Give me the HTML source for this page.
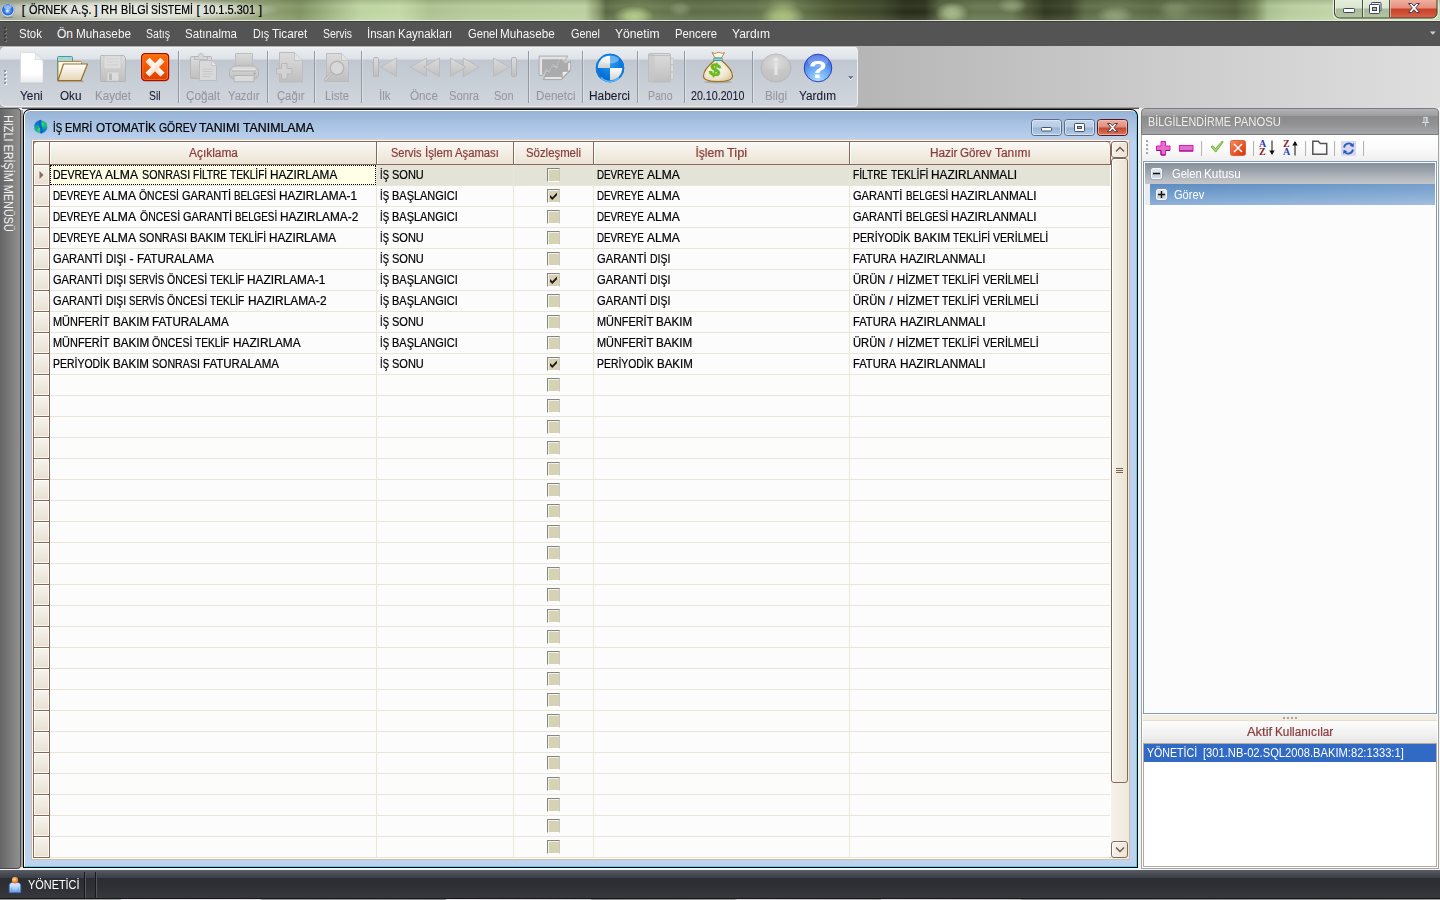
<!DOCTYPE html>
<html lang="tr"><head><meta charset="utf-8"><title>RH BİLGİ SİSTEMİ</title>
<style>

html,body{margin:0;padding:0;}
body{width:1440px;height:900px;overflow:hidden;background:#c8c8c8;font-family:"Liberation Sans",sans-serif;font-size:12px;}
#app{position:relative;width:1440px;height:900px;overflow:hidden;background:#f2f2f2;}
#app div,#app span,#app svg{position:absolute;box-sizing:border-box;}
.t{white-space:pre;line-height:1;transform-origin:0 0;-webkit-text-stroke:.22px;}

#title{background:linear-gradient(90deg,#a4ab98 0px,#a3ac92 140px,#98a57c 250px,#8c9d6e 275px,#7f9260 300px,#a4b987 335px,#bdd3a0 360px,#c2d8a4 400px,#adc190 430px,#b5c998 470px,#bcd09f 585px,#8a9a6c 598px,#5a6842 606px,#64734a 616px,#6e7e52 640px,#66744c 665px,#5f6d47 695px,#64724b 755px,#76865a 782px,#5a6842 812px,#48532f 835px,#3c442a 880px,#272c19 905px,#2a2f1c 925px,#55613e 940px,#66744e 975px,#66744e 1012px,#4a5436 1028px,#2f361f 1045px,#3a4228 1070px,#5c6a44 1085px,#66744e 1120px,#5a6843 1150px,#66744e 1190px,#525e3c 1235px,#75875a 1255px,#a9bf8e 1268px,#b8cd9e 1290px,#c2d6a8 1340px,#c4d8ac 1440px);overflow:hidden;}
#tblob{background:radial-gradient(ellipse 20px 10px at 634px 16px,rgba(180,204,136,0.95) 0,rgba(180,204,136,0.76) 40%,rgba(180,204,136,0) 100%),radial-gradient(ellipse 12px 8px at 680px 9px,rgba(132,148,108,0.80) 0,rgba(132,148,108,0.64) 40%,rgba(132,148,108,0) 100%),radial-gradient(ellipse 22px 12px at 783px 16px,rgba(170,192,122,0.95) 0,rgba(170,192,122,0.76) 40%,rgba(170,192,122,0) 100%),radial-gradient(ellipse 16px 6px at 783px 4px,rgba(140,158,104,0.60) 0,rgba(140,158,104,0.48) 40%,rgba(140,158,104,0) 100%),radial-gradient(ellipse 17px 11px at 952px 13px,rgba(170,190,142,0.95) 0,rgba(170,190,142,0.76) 40%,rgba(170,190,142,0) 100%),radial-gradient(ellipse 15px 9px at 1012px 5px,rgba(142,158,116,0.85) 0,rgba(142,158,116,0.68) 40%,rgba(142,158,116,0) 100%),radial-gradient(ellipse 19px 9px at 1115px 15px,rgba(146,162,120,0.85) 0,rgba(146,162,120,0.68) 40%,rgba(146,162,120,0) 100%),radial-gradient(ellipse 17px 11px at 1175px 10px,rgba(128,144,102,0.80) 0,rgba(128,144,102,0.64) 40%,rgba(128,144,102,0) 100%);}
#tglow{background:radial-gradient(ellipse at 50% 50%,rgba(255,255,255,.78) 0,rgba(255,255,255,.62) 45%,rgba(255,255,255,0) 72%);}
#tshade{background:linear-gradient(180deg,rgba(60,70,40,.18) 0,rgba(255,255,255,.06) 6px,rgba(255,255,255,.0) 12px,rgba(255,255,255,.12) 100%);}
#menu{background:linear-gradient(180deg,#3e3e3e 0,#3e3e3e 1px,#545454 1px);}
.mdot{width:2px;height:2px;background:#3a3a3a;box-shadow:1px 1px 0 #7a7a7a;}

#tbarea{background:linear-gradient(90deg,#b2b2b2 0,#b6b6b6 860px,#cbcbcb 1150px,#dedede 1440px);}
#tbsh{background:#eceef1;border-radius:5px 4px 4px 5px;}
#tb{background:linear-gradient(180deg,#f4f6f8 0,#e9ecef 2px,#dfe3e8 12px,#c0c7d0 13px,#c7cdd5 30px,#d1d6dc 100%);border-radius:5px 3px 3px 5px;}
.tsep{width:2px;height:52px;border-left:1px solid #959ba5;border-right:1px solid rgba(255,255,255,.3);}
.gdot{width:2px;height:2px;background:#8e96a3;box-shadow:1px 1px 0 #f4f6f8;}

#mdi{background:#f2f2f2;}
#side{background:linear-gradient(90deg,#656565 0,#7b7b7b 10px,#909090 20px);border-radius:0 4px 4px 0;border:1px solid #4a4a4a;border-left:none;}
#child{background:#000;border-radius:7px 7px 0 0;}
#childin{background:linear-gradient(180deg,#96b2d5 0,#a9c3e3 14px,#bcd3ef 30px,#bdd3ee 100%);border-radius:6px 6px 0 0;border-top:1px solid #fff;border-left:1px solid #fff;border-right:1px solid #43d4f6;border-bottom:1px solid #43d4f6;top:1px!important;left:1px!important;}
#gridout{background:#fbf9f4;border:1px solid #cdbfb0;border-top-color:#d9cec2;}
#grid{background:#fdfdfd;border:1px solid #876759;border-right-color:#fdfdfd;}
#ghead{background:#876759;border-radius:5px 5px 0 0;}
.hcell{background:linear-gradient(180deg,#fbf9f5 0,#f3eee4 50%,#ebe3d3 100%);box-shadow:inset 1px 1px 0 #fff;}
.row{background:#fcfcfc;border-bottom:1px solid #ebe4d9;}
.row.sel{background:#e4e3d8;}
.ind{background:linear-gradient(180deg,#f7f4ee 0,#efeadf 50%,#e8e0d0 100%);border:1px solid #876759;border-top:none;border-left:none;box-shadow:inset 1px 1px 0 #fff,inset -1px -1px 0 #fbf9f4;}
.vline{background:#ece5da;}
.cb{width:13px;height:14px;background:#d6d3b5;border-top:1px solid #858585;border-left:1px solid #858585;border-right:1px solid #c9c9c0;border-bottom:1px solid #fff;box-shadow:inset 1px 1px 0 #f1f0e6;}
#focus{border:1px dotted #000;background:#ffffe8;}
#vsb{background:linear-gradient(90deg,#f6f2ea,#efe9dc);}
.sbtn{background:linear-gradient(90deg,#f6f2ea 0,#ebe4d4 100%);border:1px solid #876759;border-radius:3px;box-shadow:inset 1px 1px 0 #fff;}

#ptb{background:linear-gradient(180deg,#fff 0,#fbfbfb 50%,#efefef 100%);}
#panel{background:#fff;border:1px solid #a4a4a4;border-top:none;}
#phead{background:linear-gradient(180deg,#b4b4b8 0,#9c9c9e 7px,#8b8b8c 7px,#909092 14px,#a4a6aa 25px);border:1px solid #7c7c7c;border-radius:4px 4px 0 0;}
.pdot{width:2px;height:2px;background:#a9a9a9;box-shadow:1px 1px 0 #eee;}
.psep{width:2px;height:15px;border-left:1px solid #b4b4b4;border-right:1px solid #f6f6f6;}
#tree{background:#fcfcfc;border:1px solid #7f9db9;}
#trow1{background:linear-gradient(180deg,#868f9b 0,#9aa1ab 35%,#b4b9bf 70%,#c4c6c8 100%);}
#trow2ind{background:#e9edf2;}
#trow2{background:linear-gradient(180deg,#5d8cc0 0,#6c9aca 40%,#8fb1d9 100%);}
#trow2:after{content:"";position:absolute;left:0;top:0;right:0;bottom:0;background:linear-gradient(90deg,rgba(255,255,255,0) 0,rgba(255,255,255,.16) 100%);}
.tbox{width:11px;height:11px;background:linear-gradient(180deg,#e4e8ee 0,#dde2ea 45%,#c6cedb 50%,#d4dae4 100%);border:1px solid #f6f7f9;border-radius:2px;box-shadow:0 0 0 1px rgba(140,155,180,.45);}
#split{background:#f3eee4;border-top:1px solid #fbf9f4;border-bottom:1px solid #e4dccd;}
#auhead{background:linear-gradient(180deg,#fdfdfd 0,#f1f1f1 60%,#e6e6e6 100%);}
#aulist{background:#fff;border:1px solid #b9a999;}

#status{background:linear-gradient(180deg,#5b5d68 0,#50525c 2px,#3c3e46 8px,#2c2d32 8px,#2e2f34 16px,#37383e 100%);}
#botedge{background:linear-gradient(90deg,#8f948f 0,#a4a8a2 120px,#e8e8e8 122px,#dcdcdc 260px,#9a9e9a 262px,#8c908c 445px,#e4e4e4 447px,#c4c6c4 590px,#8c908c 592px,#9a9e98 735px,#d8d8d8 737px,#a8aaa6 880px,#e0e0e0 882px,#b8bab6 1020px,#8c8e8c 1022px,#989a96 1440px);}
.ssep{width:2px;height:26px;border-left:1px solid #18181b;border-right:1px solid #55565e;}

</style></head><body>
<div id="app">
<div id="title" style="left:0;top:0;width:1440px;height:21px;"><div id="tblob" style="left:0;top:0;width:1440px;height:21px;"></div><div id="tglow" style="left:-12px;top:-2px;width:290px;height:24px;"></div><div id="tshade" style="left:0;top:0;width:1440px;height:21px;"></div><svg style="left:0;top:2px" width="16" height="17" viewBox="0 0 16 17"><defs><radialGradient id="orb" cx=".5" cy=".55" r=".6"><stop offset="0" stop-color="#9fd2ff"/><stop offset=".55" stop-color="#2f7be8"/><stop offset="1" stop-color="#1b3fae"/></radialGradient></defs>
<ellipse cx="8" cy="15.300" rx="5" ry="1" fill="#555" opacity=".4"/><circle cx="7.800" cy="8.200" r="6.800" fill="#e9eef5" stroke="#8a93a3" stroke-width=".6"/><circle cx="7.800" cy="7.800" r="5.800" fill="url(#orb)"/><ellipse cx="7.800" cy="4.800" rx="4" ry="2.200" fill="#fff" opacity=".45"/><circle cx="7.200" cy="9" r="1.500" fill="#dff1ff" opacity=".8"/></svg><span class="t" style="left:21.87px;top:4px;font-size:12px;color:#000;">[ </span><span class="t" style="left:28.65px;top:4px;font-size:12px;color:#000;transform:scaleX(0.9091);">ÖRNEK </span><span class="t" style="left:70.52px;top:4px;font-size:12px;color:#000;transform:scaleX(0.9002);">A.Ş. </span><span class="t" style="left:94.37px;top:4px;font-size:12px;color:#000;">] </span><span class="t" style="left:101.15px;top:4px;font-size:12px;color:#000;transform:scaleX(0.9421);">RH </span><span class="t" style="left:120.56px;top:4px;font-size:12px;color:#000;transform:scaleX(0.8985);">BİLGİ </span><span class="t" style="left:151.19px;top:4px;font-size:12px;color:#000;transform:scaleX(0.8720);">SİSTEMİ </span><span class="t" style="left:196.49px;top:4px;font-size:12px;color:#000;">[ </span><span class="t" style="left:203.27px;top:4px;font-size:12px;color:#000;transform:scaleX(0.9182);">10.1.5.301 </span><span class="t" style="left:258.79px;top:4px;font-size:12px;color:#000;">]</span><svg style="left:1330px;top:0" width="110" height="21" viewBox="0 0 110 21"><defs>
<linearGradient id="cbg" x1="0" y1="0" x2="0" y2="1"><stop offset="0" stop-color="#e6efdc"/><stop offset=".45" stop-color="#d9e6cd"/><stop offset=".5" stop-color="#a9b99a"/><stop offset="1" stop-color="#b7c9a6"/></linearGradient>
<linearGradient id="cbr" x1="0" y1="0" x2="0" y2="1"><stop offset="0" stop-color="#f0b3a4"/><stop offset=".45" stop-color="#e48f7c"/><stop offset=".5" stop-color="#c8402a"/><stop offset="1" stop-color="#d8694a"/></linearGradient>
<clipPath id="cbc"><path d="M4.500 -2V13a5 5 0 0 0 5 5H102a5 5 0 0 0 5-5V-2z"/></clipPath></defs>
<path d="M3.500 -2V13a6 6 0 0 0 6 6H102a6 6 0 0 0 6-6V-2" fill="none" stroke="#f2f6ea" stroke-width="1.200" opacity=".8"/>
<g clip-path="url(#cbc)"><rect x="4" y="-1" width="56" height="20" fill="url(#cbg)"/><rect x="60" y="-1" width="48" height="20" fill="url(#cbr)"/></g>
<path d="M4.500 -2V13a5 5 0 0 0 5 5H102a5 5 0 0 0 5-5V-2" fill="none" stroke="#38432f" stroke-width="1"/>
<path d="M32.500 0v17.500M59.500 0v17.500" stroke="#4a5540" stroke-width="1"/><path d="M33.500 0v17M5.500 0v13" stroke="#f4f8ee" stroke-width="1" opacity=".7"/><path d="M60.500 0v17" stroke="#f6c8bc" stroke-width="1" opacity=".7"/>
<rect x="13.500" y="8.500" width="11" height="4" rx=".8" fill="#fff" stroke="#3f4560" stroke-width="1"/>
<rect x="41.500" y="2.500" width="9.500" height="8.500" rx=".8" fill="#eef0f4" stroke="#3f4560" stroke-width="1"/><rect x="39.500" y="4.500" width="10" height="9" rx=".8" fill="#fff" stroke="#3f4560" stroke-width="1"/><rect x="42.500" y="7.500" width="4" height="3" fill="#a9b99a" stroke="#3f4560" stroke-width="1"/>
<path d="M78.500 3.500h3.200l2.300 2.600 2.300-2.600h3.200l-3.800 4.400 4 4.600h-3.300l-2.400-2.800-2.400 2.800h-3.300l4-4.600z" fill="#fff" stroke="#4a3a48" stroke-width="1" stroke-linejoin="round"/></svg><div style="left:0;top:20px;width:1440px;height:1px;background:#e6efda;opacity:.9"></div></div><div id="menu" style="left:0;top:21px;width:1440px;height:25px;"><div class="mdot" style="left:4px;top:6px;"></div><div class="mdot" style="left:4px;top:10px;"></div><div class="mdot" style="left:4px;top:14px;"></div><div class="mdot" style="left:4px;top:18px;"></div><span class="t" style="left:19px;top:7px;font-size:12px;color:#f6f6f6;transform:scaleX(0.9577);-webkit-text-stroke:0;">Stok</span><span class="t" style="left:57px;top:7px;font-size:12px;color:#f6f6f6;-webkit-text-stroke:0;">Ön </span><span class="t" style="left:76px;top:7px;font-size:12px;color:#f6f6f6;transform:scaleX(0.9813);-webkit-text-stroke:0;">Muhasebe</span><span class="t" style="left:146px;top:7px;font-size:12px;color:#f6f6f6;transform:scaleX(0.8772);-webkit-text-stroke:0;">Satış</span><span class="t" style="left:185px;top:7px;font-size:12px;color:#f6f6f6;transform:scaleX(0.9624);-webkit-text-stroke:0;">Satınalma</span><span class="t" style="left:252.5px;top:7px;font-size:12px;color:#f6f6f6;transform:scaleX(0.8971);-webkit-text-stroke:0;">Dış </span><span class="t" style="left:271.68px;top:7px;font-size:12px;color:#f6f6f6;transform:scaleX(0.9749);-webkit-text-stroke:0;">Ticaret</span><span class="t" style="left:322.5px;top:7px;font-size:12px;color:#f6f6f6;transform:scaleX(0.8697);-webkit-text-stroke:0;">Servis</span><span class="t" style="left:366.5px;top:7px;font-size:12px;color:#f6f6f6;transform:scaleX(0.9593);-webkit-text-stroke:0;">İnsan </span><span class="t" style="left:397.68px;top:7px;font-size:12px;color:#f6f6f6;transform:scaleX(0.9579);-webkit-text-stroke:0;">Kaynakları</span><span class="t" style="left:467.5px;top:7px;font-size:12px;color:#f6f6f6;transform:scaleX(0.9313);-webkit-text-stroke:0;">Genel </span><span class="t" style="left:500.31px;top:7px;font-size:12px;color:#f6f6f6;transform:scaleX(0.9757);-webkit-text-stroke:0;">Muhasebe</span><span class="t" style="left:570.5px;top:7px;font-size:12px;color:#f6f6f6;transform:scaleX(0.9054);-webkit-text-stroke:0;">Genel</span><span class="t" style="left:615px;top:7px;font-size:12px;color:#f6f6f6;transform:scaleX(1.0106);-webkit-text-stroke:0;">Yönetim</span><span class="t" style="left:675px;top:7px;font-size:12px;color:#f6f6f6;transform:scaleX(0.9395);-webkit-text-stroke:0;">Pencere</span><span class="t" style="left:732px;top:7px;font-size:12px;color:#f6f6f6;transform:scaleX(1.0054);-webkit-text-stroke:0;">Yardım</span><svg style="left:1429px;top:9px" width="8" height="6" viewBox="0 0 8 6"><path d="M.8 1.500h6L3.800 4.800z" fill="#c9cfdf"/></svg></div>
<div id="tbarea" style="left:0;top:46px;width:1440px;height:62px;"></div><div style="left:22px;top:107px;width:1117px;height:1px;background:#a2a2a2"></div><div style="left:22px;top:108px;width:1117px;height:1px;background:#565656"></div><div id="tbsh" style="left:0;top:47px;width:858px;height:60px;"></div><div id="tb" style="left:0;top:47px;width:857px;height:59px;"></div><div class="gdot" style="left:4px;top:70px;"></div><div class="gdot" style="left:4px;top:74px;"></div><div class="gdot" style="left:4px;top:78px;"></div><div class="gdot" style="left:4px;top:82px;"></div><span class="t" style="left:20.4px;top:90px;font-size:12px;color:#1a1a34;transform:scaleX(0.9860);-webkit-text-stroke:.1px;">Yeni</span><span class="t" style="left:60px;top:90px;font-size:12px;color:#1a1a34;transform:scaleX(0.9766);-webkit-text-stroke:.1px;">Oku</span><span class="t" style="left:95px;top:90px;font-size:12px;color:#9896a4;transform:scaleX(0.9636);-webkit-text-stroke:.1px;">Kaydet</span><span class="t" style="left:148.5px;top:90px;font-size:12px;color:#1a1a34;transform:scaleX(0.8618);-webkit-text-stroke:.1px;">Sil</span><span class="t" style="left:186px;top:90px;font-size:12px;color:#9896a4;transform:scaleX(0.9802);-webkit-text-stroke:.1px;">Çoğalt</span><span class="t" style="left:227.5px;top:90px;font-size:12px;color:#9896a4;transform:scaleX(0.9320);-webkit-text-stroke:.1px;">Yazdır</span><span class="t" style="left:276.5px;top:90px;font-size:12px;color:#9896a4;transform:scaleX(0.9372);-webkit-text-stroke:.1px;">Çağır</span><span class="t" style="left:325px;top:90px;font-size:12px;color:#9896a4;transform:scaleX(0.9464);-webkit-text-stroke:.1px;">Liste</span><span class="t" style="left:378.5px;top:90px;font-size:12px;color:#9896a4;transform:scaleX(0.9583);-webkit-text-stroke:.1px;">İlk</span><span class="t" style="left:410px;top:90px;font-size:12px;color:#9896a4;transform:scaleX(0.9760);-webkit-text-stroke:.1px;">Önce</span><span class="t" style="left:449px;top:90px;font-size:12px;color:#9896a4;transform:scaleX(0.9366);-webkit-text-stroke:.1px;">Sonra</span><span class="t" style="left:494px;top:90px;font-size:12px;color:#9896a4;transform:scaleX(0.9129);-webkit-text-stroke:.1px;">Son</span><span class="t" style="left:535.5px;top:90px;font-size:12px;color:#9896a4;transform:scaleX(0.9708);-webkit-text-stroke:.1px;">Denetci</span><span class="t" style="left:589px;top:90px;font-size:12px;color:#1a1a34;transform:scaleX(0.9913);-webkit-text-stroke:.1px;">Haberci</span><span class="t" style="left:648px;top:90px;font-size:12px;color:#9896a4;transform:scaleX(0.8740);-webkit-text-stroke:.1px;">Pano</span><span class="t" style="left:690.8px;top:90px;font-size:12px;color:#1a1a34;transform:scaleX(0.8891);-webkit-text-stroke:.1px;">20.10.2010</span><span class="t" style="left:764.7px;top:90px;font-size:12px;color:#9896a4;transform:scaleX(0.9697);-webkit-text-stroke:.1px;">Bilgi</span><span class="t" style="left:799.2px;top:90px;font-size:12px;color:#1a1a34;transform:scaleX(0.9816);-webkit-text-stroke:.1px;">Yardım</span><div class="tsep" style="left:178px;top:51px;"></div><div class="tsep" style="left:267px;top:51px;"></div><div class="tsep" style="left:314px;top:51px;"></div><div class="tsep" style="left:361px;top:51px;"></div><div class="tsep" style="left:528px;top:51px;"></div><div class="tsep" style="left:582px;top:51px;"></div><div class="tsep" style="left:637px;top:51px;"></div><div class="tsep" style="left:684px;top:51px;"></div><div class="tsep" style="left:752px;top:51px;"></div><svg style="left:847px;top:76px;" width="8" height="5" viewBox="0 0 8 5"><path d="M1 1.2h5.4L3.7 4.2z" fill="#f4f6f9"/><path d="M1 0.2h5.4L3.7 3.2z" fill="#5c6b8c"/></svg><svg width="0" height="0" style="left:0;top:0"><defs><linearGradient id="gg" x1="0" y1="0" x2="0" y2="1"><stop offset="0" stop-color="#dcdcdc"/><stop offset="1" stop-color="#bfbfbf"/></linearGradient><linearGradient id="gh" x1="0" y1="0" x2="1" y2="0"><stop offset="0" stop-color="#c2c2c2"/><stop offset="1" stop-color="#d8d8d8"/></linearGradient></defs></svg><svg style="left:19px;top:51px;" width="26" height="33" viewBox="0 0 26 33"><defs><linearGradient id="pg" x1="0" y1="0" x2="0" y2="1"><stop offset="0" stop-color="#ffffff"/><stop offset=".7" stop-color="#ffffff"/><stop offset="1" stop-color="#e9ebee"/></linearGradient></defs>
<path d="M1.5 1.5h14.5l8 8v22h-22.5z" fill="#b9bec6" opacity=".55" transform="translate(.6,.8)"/>
<path d="M1.5 1.5h14.5l8 8v22h-22.5z" fill="url(#pg)" stroke="#d5d8dd" stroke-width=".8"/>
<path d="M16 1.5c1 3 .6 5.5-.5 7.5 2.500-1 5.500-.8 8.500.5z" fill="#d9dbdf"/><path d="M16 1.500l8 8c-3-1.300-6-1.500-8.500-.5 1.100-2 1.500-4.500.5-7.500z" fill="#eceef0" stroke="#cfd2d6" stroke-width=".5"/></svg><svg style="left:56px;top:55px;" width="33" height="29" viewBox="0 0 33 29"><defs><linearGradient id="fo" x1="0" y1="0" x2="0" y2="1"><stop offset="0" stop-color="#ffffff"/><stop offset="1" stop-color="#e6d6b8"/></linearGradient></defs>
<rect x="1.500" y="25.500" width="26" height="1.600" fill="#9a875f" opacity=".6"/>
<path d="M1.500 25.500V2.500a1 1 0 0 1 1-1h13a1 1 0 0 1 1 1v3.500" fill="#a8d6d6" stroke="#3aa0a0" stroke-width="1"/>
<rect x="2.500" y="2.500" width="13" height="3.500" fill="#a5d5d3"/>
<path d="M2 6.500h22.500a1 1 0 0 1 1 1V25.500H2z" fill="#fbf7ee" stroke="#b08a46" stroke-width="1"/>
<path d="M2 25.500l5.500-16.500h24l-6.500 16.500z" fill="url(#fo)" stroke="#9a6f22" stroke-width="1.200" stroke-linejoin="round"/></svg><svg style="left:99px;top:54px;" width="28" height="29" viewBox="0 0 28 29"><path d="M1.500 2.500a1 1 0 0 1 1-1h22l2 2v23a1 1 0 0 1-1 1h-23a1 1 0 0 1-1-1z" fill="url(#gg)" stroke="#b4b4b4"/>
<rect x="5" y="1.800" width="17" height="13" fill="#dedede" stroke="#c2c2c2" stroke-width=".6"/>
<path d="M7 5h13M7 8h13M7 11h13" stroke="#cfcfcf" stroke-width="1"/>
<rect x="8" y="18" width="12" height="9" fill="#dcdcdc" stroke="#bdbdbd" stroke-width=".6"/><rect x="10" y="19.500" width="3" height="6.500" fill="#b9b9b9"/></svg><svg style="left:140px;top:52px;" width="30" height="30" viewBox="0 0 30 30"><defs><linearGradient id="sr" x1="0" y1="0" x2="0" y2="1"><stop offset="0" stop-color="#ff6e0a"/><stop offset=".5" stop-color="#f25600"/><stop offset="1" stop-color="#dc3c00"/></linearGradient>
<linearGradient id="sx" x1="0" y1="0" x2="0" y2="1"><stop offset="0" stop-color="#ffffff"/><stop offset="1" stop-color="#ffd9c4"/></linearGradient></defs>
<rect x="1.600" y="1.600" width="27" height="27" rx="3.500" fill="url(#sr)" stroke="#a30f00" stroke-width="1.200"/>
<rect x="2.800" y="2.800" width="24.600" height="24.600" rx="2.500" fill="none" stroke="#ff8a3a" stroke-width=".8" opacity=".8"/>
<g transform="translate(15,15.200)" fill="url(#sx)"><rect x="-10.600" y="-2.900" width="21.200" height="5.800" transform="rotate(45)"/><rect x="-10.600" y="-2.900" width="21.200" height="5.800" transform="rotate(-45)"/></g></svg><svg style="left:189px;top:52px;" width="29" height="30" viewBox="0 0 29 30"><rect x="1.500" y="4.500" width="21" height="22" rx="1" fill="url(#gg)" stroke="#b5b5b5"/>
<path d="M5.500 7.500V4.500h3.800c0-4 5.400-4 5.400 0h3.800V7.500z" fill="#d6d6d6" stroke="#b5b5b5" stroke-width=".8"/>
<path d="M10.500 8.500h12l5 5v15h-17z" fill="#d9d9d9" stroke="#bcbcbc"/><path d="M22.500 8.500v5h5" fill="#e6e6e6" stroke="#bcbcbc" stroke-width=".7"/>
<path d="M13.500 17h10M13.500 19.500h10M13.500 22h10M13.500 24.500h8" stroke="#c4c4c4" stroke-width=".9"/></svg><svg style="left:228px;top:52px;" width="32" height="31" viewBox="0 0 32 31"><path d="M7.500 1.500h17v14h-17z" fill="url(#gg)" stroke="#bdbdbd"/>
<path d="M1.500 21c0-4 3-7 7-7h15c4 0 7 3 7 7v1.500c0 2.500-2 4.500-4.500 4.500h-20c-2.500 0-4.500-2-4.500-4.500z" fill="url(#gg)" stroke="#b2b2b2"/>
<path d="M4.500 17.500h23" stroke="#e4e4e4" stroke-width="1.600"/><path d="M4 19h24" stroke="#a8a8a8" stroke-width=".8"/>
<path d="M6 23.500h20v5.500a.8.800 0 0 1-.8.800h-18.400a.8.800 0 0 1-.8-.8z" fill="#dadada" stroke="#b4b4b4"/><circle cx="26.500" cy="21.500" r=".9" fill="#999"/></svg><svg style="left:275px;top:51px;" width="29" height="32" viewBox="0 0 29 32"><path d="M4.500 1.500h15l8 8v21.500h-23z" fill="url(#gg)" stroke="#bcbcbc"/><path d="M19.500 1.500v8h8" fill="#e2e2e2" stroke="#c2c2c2" stroke-width=".8"/>
<path d="M6.500 12.500h5.500v5h5v5.500h-5v5h-5.500v-5h-5v-5.500h5z" fill="#d2d2d2" stroke="#b8b8b8" stroke-width="1"/></svg><svg style="left:322px;top:52px;" width="28" height="31" viewBox="0 0 28 31"><path d="M4.500 1.500h15l7 7v21h-22z" fill="url(#gg)" stroke="#bcbcbc"/><path d="M19.500 1.500v7h7" fill="#e2e2e2" stroke="#c2c2c2" stroke-width=".8"/>
<path d="M10.500 20.500l-7 7.500" stroke="#b4b4b4" stroke-width="3.200" stroke-linecap="round"/><path d="M10.500 20.500l-7 7.500" stroke="#d0d0d0" stroke-width="1.600" stroke-linecap="round"/>
<circle cx="15" cy="16" r="6.800" fill="#d8d8d8" stroke="#b6b6b6" stroke-width="1.400"/></svg><svg style="left:372px;top:56px;" width="27" height="22" viewBox="0 0 27 22"><rect x="1.500" y="1.500" width="5" height="19" rx="1.200" fill="url(#gg)" stroke="#b4b4b4"/><path d="M8.800 11.200L24.500 2v18.500z" fill="url(#gg)" stroke="#b8b8b8" stroke-width=".8"/></svg><svg style="left:409px;top:56px;" width="32" height="22" viewBox="0 0 32 22"><path d="M1.500 11.200L17.500 2v18.500z" fill="url(#gg)" stroke="#b8b8b8" stroke-width=".8"/><path d="M14.800 11.200L30.500 2v18.500z" fill="url(#gg)" stroke="#b8b8b8" stroke-width=".8"/></svg><svg style="left:449px;top:56px;" width="32" height="22" viewBox="0 0 32 22"><path d="M30 11.200L14.300 2v18.500z" fill="url(#gg)" stroke="#b8b8b8" stroke-width=".8"/><path d="M17 11.200L1.500 2v18.500z" fill="url(#gg)" stroke="#b8b8b8" stroke-width=".8"/></svg><svg style="left:492px;top:56px;" width="27" height="22" viewBox="0 0 27 22"><path d="M17.200 11.200L1.500 2v18.500z" fill="url(#gg)" stroke="#b8b8b8" stroke-width=".8"/><rect x="19.500" y="1.500" width="5" height="19" rx="1.200" fill="url(#gg)" stroke="#b4b4b4"/></svg><svg style="left:535px;top:52px;" width="40" height="32" viewBox="0 0 40 32"><path d="M4.100 4.100H32.900L29.700 8.400 24.900 7.500 22.400 14.200 17.800 12.600 15.300 19.400 11 17.400 7.100 23.800 4.100 23.100z" fill="#e3e3e3" stroke="#a6a6a6" stroke-width=".9" stroke-linejoin="round"/>
<path d="M7.100 7.300H24.500L22 13.500 17.600 12.100 14.900 18.500 10.800 16.900 7.600 22.400H7.100z" fill="#acacac"/>
<path d="M25.400 8.400L30.900 11.700 35.600 9.200 35.700 18.500 26.500 27.600H8.400L11.700 19.700 14.600 21.300 18.100 14.900 22.600 17.100z" fill="#ababab" stroke="#a6a6a6" stroke-width=".9" stroke-linejoin="round"/>
<path d="M33.100 11.400L35.200 10.300V18.100L33.100 18.800z" fill="#e6e6e6"/><path d="M27.700 20.100L32.900 19.700 27.700 24.900z" fill="#ececec"/><path d="M10.300 25.100H26.700L26.300 27H9.400z" fill="#e4e4e4"/></svg><svg style="left:595px;top:53px;" width="31" height="31" viewBox="0 0 31 31"><defs><radialGradient id="hb" cx=".5" cy=".35" r=".7"><stop offset="0" stop-color="#2a9af0"/><stop offset=".6" stop-color="#0a78dc"/><stop offset="1" stop-color="#0560c0"/></radialGradient>
<linearGradient id="hw" x1="0" y1="0" x2="0" y2="1"><stop offset="0" stop-color="#ffffff"/><stop offset="1" stop-color="#cfcfcf"/></linearGradient><clipPath id="hc"><circle cx="15" cy="15" r="14.200"/></clipPath></defs>
<circle cx="15" cy="15" r="14.200" fill="url(#hb)"/>
<g clip-path="url(#hc)"><path d="M15 15V2.500h-13V15z" fill="url(#hw)"/><path d="M15 15h13v13h-13z" fill="url(#hw)"/></g>
<circle cx="15" cy="15" r="13.200" fill="none" stroke="#0b7be0" stroke-width="2"/>
<ellipse cx="15" cy="6.500" rx="9" ry="4" fill="#fff" opacity=".35"/><path d="M6 24.500a12 12 0 0 0 18 0" stroke="#6fc6ff" stroke-width="1.600" fill="none" opacity=".8"/></svg><svg style="left:647px;top:52px;" width="28" height="31" viewBox="0 0 28 31"><rect x="23" y="6" width="3.500" height="6.500" rx=".8" fill="#dcdcdc" stroke="#c2c2c2" stroke-width=".7"/><rect x="23" y="13.200" width="3.500" height="6.500" rx=".8" fill="#dcdcdc" stroke="#c2c2c2" stroke-width=".7"/><rect x="23" y="20.400" width="3.500" height="6.500" rx=".8" fill="#dcdcdc" stroke="#c2c2c2" stroke-width=".7"/>
<rect x="1.500" y="1.500" width="22" height="28.500" rx="1.500" fill="url(#gg)" stroke="#bcbcbc"/><rect x="1.500" y="1.500" width="6" height="28.500" fill="#c6c6c6" opacity=".6"/><path d="M2 3.500h21" stroke="#b8b8b8" stroke-width=".8"/></svg><svg style="left:702px;top:51px;" width="33" height="33" viewBox="0 0 33 33"><defs><radialGradient id="mb" cx=".4" cy=".4" r=".75"><stop offset="0" stop-color="#fffdf6"/><stop offset=".6" stop-color="#f1e6cf"/><stop offset="1" stop-color="#d9c49a"/></radialGradient></defs>
<ellipse cx="16" cy="31" rx="14" ry="1.500" fill="#8a8570" opacity=".45"/>
<path d="M10 1.500l3 5.500h6.500l3-5.500q-2.500 1.500-4 .3-2-1.300-4 .2-2 1-4.500-.5z" fill="#fbf7ea" stroke="#a9853f" stroke-width=".9"/>
<path d="M12.500 9.500C7 14 1.500 20 1.500 25c0 4 5 5.500 14.500 5.500S30.500 29 30.500 25c0-5-5.500-11-11-15.500z" fill="url(#mb)" stroke="#9a6f1e" stroke-width="1.100"/>
<rect x="11.500" y="7" width="9" height="2.600" rx="1.200" fill="#8fd0cf" stroke="#2f9a9a" stroke-width=".8"/></svg><span class="t" style="left:709.8px;top:60.5px;font-size:18px;font-weight:bold;color:#6cba1c;text-shadow:0 0 1px #4a9410;transform:rotate(14deg) scaleX(1.1);transform-origin:50% 50%;">$</span><svg style="left:760px;top:53px;" width="33" height="30" viewBox="0 0 33 30"><defs><radialGradient id="bi" cx=".5" cy=".3" r=".8"><stop offset="0" stop-color="#dcdcdc"/><stop offset="1" stop-color="#b8b8b8"/></radialGradient></defs>
<ellipse cx="16" cy="15" rx="15" ry="14" fill="url(#bi)" stroke="#b4b4b4" stroke-width=".8"/><path d="M1.500 15a14.500 13.500 0 0 0 29 0q-14.500 3-29 0z" fill="#c4c4c4" opacity=".6"/>
<circle cx="16" cy="6.500" r="2.100" fill="#e8e8e8"/><rect x="14.300" y="10" width="3.400" height="12" rx="1" fill="#e4e4e4"/></svg><svg style="left:803px;top:53px;" width="30" height="30" viewBox="0 0 30 30"><defs><radialGradient id="yq" cx=".5" cy=".95" r=".9"><stop offset="0" stop-color="#b0e0ff"/><stop offset=".5" stop-color="#6aa8f6"/><stop offset="1" stop-color="#3563e0"/></radialGradient></defs>
<circle cx="15" cy="15" r="13.800" fill="url(#yq)" stroke="#2a3fc0" stroke-width="1"/>
<ellipse cx="15" cy="8" rx="10.500" ry="6" fill="#fff" opacity=".22"/></svg><span class="t" style="left:809px;top:57.5px;font-size:24px;font-weight:bold;color:#fff;transform:scaleX(1.22);">?</span>
<div id="mdi" style="left:0;top:109px;width:1440px;height:761px;"></div><div style="left:20px;top:110px;width:3px;height:757px;background:#a2a2a2;"></div><div id="side" style="left:0;top:108px;width:21px;height:761px;"></div><span class="t" style="left:0px;top:-11px;font-size:13px;color:#f4f4f4;transform:rotate(90deg) scaleX(0.8335);-webkit-text-stroke:0;left:14.5px;top:114.5px;">HIZLI ERİŞİM MENÜSÜ</span><div id="child" style="left:23px;top:109px;width:1115px;height:759px;"><div id="childin" style="left:0;top:0;width:1113px;height:757px;"></div></div><svg style="left:32px;top:118px" width="18" height="18" viewBox="0 0 18 18"><defs><filter id="bl" x="-20%" y="-20%" width="140%" height="140%"><feGaussianBlur stdDeviation=".75"/></filter>
<radialGradient id="sw0" cx=".5" cy=".5" r=".5"><stop offset="0" stop-color="#128cc0"/><stop offset=".72" stop-color="#16a0a0" stop-opacity=".9"/><stop offset="1" stop-color="#20b090" stop-opacity="0"/></radialGradient></defs>
<g filter="url(#bl)"><circle cx="8.700" cy="8.800" r="7.300" fill="url(#sw0)"/>
<path d="M8.500 2.300C5 2.300 2.300 5.300 2.300 8.500c2.200.5 4.700-.5 5.700-3z" fill="#0a6ad0" opacity=".8"/>
<path d="M9 15.300c3.600 0 6.200-3 6.200-6.200-2.200-.5-4.700.5-5.700 3z" fill="#0a74c8" opacity=".75"/>
<ellipse cx="12.300" cy="7.500" rx="2.600" ry="3.400" fill="#18b47c" opacity=".75"/><ellipse cx="5" cy="10.300" rx="2.600" ry="3.200" fill="#14a88c" opacity=".75"/>
<ellipse cx="10.900" cy="6.400" rx="1.700" ry="2.100" fill="#14e650" opacity=".95"/><ellipse cx="7" cy="11.800" rx="1.600" ry="2" fill="#22e25c" opacity=".95"/>
<path d="M8.300 3C6.500 6 11 11 9.200 14.400" fill="none" stroke="#0a5ae6" stroke-width="2.200" stroke-linecap="round"/></g></svg><span class="t" style="left:53px;top:122px;font-size:12px;color:#000;transform:scaleX(0.8057);">İŞ </span><span class="t" style="left:65.19px;top:122px;font-size:12px;color:#000;transform:scaleX(0.9140);">EMRİ </span><span class="t" style="left:95.65px;top:122px;font-size:12px;color:#000;transform:scaleX(0.9733);">OTOMATİK </span><span class="t" style="left:158.62px;top:122px;font-size:12px;color:#000;transform:scaleX(0.8669);">GÖREV </span><span class="t" style="left:199.24px;top:122px;font-size:12px;color:#000;transform:scaleX(1.0211);">TANIMI </span><span class="t" style="left:242.91px;top:122px;font-size:12px;color:#000;transform:scaleX(1.0284);">TANIMLAMA</span><svg style="left:1029px;top:117px" width="102" height="21" viewBox="0 0 102 21"><defs>
<linearGradient id="kb" x1="0" y1="0" x2="0" y2="1"><stop offset="0" stop-color="#c6d7ec"/><stop offset=".48" stop-color="#b7cce6"/><stop offset=".52" stop-color="#98b4d6"/><stop offset="1" stop-color="#b4cbe6"/></linearGradient>
<linearGradient id="kr" x1="0" y1="0" x2="0" y2="1"><stop offset="0" stop-color="#eeb0a2"/><stop offset=".48" stop-color="#e08d7a"/><stop offset=".52" stop-color="#c4452c"/><stop offset="1" stop-color="#dc7a62"/></linearGradient></defs>
<rect x="2.500" y="2.500" width="30" height="16" rx="3" fill="url(#kb)" stroke="#5a6b86"/><rect x="3.500" y="3.500" width="28" height="14" rx="2" fill="none" stroke="#dfe9f6" stroke-width="1" opacity=".8"/>
<rect x="35.500" y="2.500" width="30" height="16" rx="3" fill="url(#kb)" stroke="#5a6b86"/><rect x="36.500" y="3.500" width="28" height="14" rx="2" fill="none" stroke="#dfe9f6" stroke-width="1" opacity=".8"/>
<rect x="68.500" y="2.500" width="30" height="16" rx="3" fill="url(#kr)" stroke="#521a28"/><rect x="69.500" y="3.500" width="28" height="14" rx="2" fill="none" stroke="#f4c4b8" stroke-width="1" opacity=".7"/>
<rect x="12.500" y="10.500" width="10" height="3.500" rx=".8" fill="#fff" stroke="#46506a"/>
<rect x="45.500" y="6.500" width="10" height="8" rx=".8" fill="#fff" stroke="#46506a"/><rect x="48.500" y="9.500" width="4" height="2" fill="#98b4d6" stroke="#46506a"/>
<path d="M78.500 6.500h3l2 2.300 2-2.300h3l-3.500 4 3.700 4.200h-3.100l-2.100-2.500-2.100 2.500h-3.100l3.700-4.200z" fill="#fff" stroke="#4a3a48" stroke-width="1" stroke-linejoin="round"/></svg><div id="gridout" style="left:31px;top:139px;width:1099px;height:721px;"></div><div id="grid" style="left:33px;top:141px;width:1078px;height:717px;"></div><div id="ghead" style="left:33px;top:141px;width:1078px;height:24px;"></div><div class="hcell" style="left:34px;top:142px;width:15px;height:22px;border-radius:4px 0 0 0;"></div><div class="hcell" style="left:50px;top:142px;width:326px;height:22px;"></div><div class="hcell" style="left:377px;top:142px;width:136px;height:22px;"></div><div class="hcell" style="left:514px;top:142px;width:79px;height:22px;"></div><div class="hcell" style="left:594px;top:142px;width:255px;height:22px;"></div><div class="hcell" style="left:850px;top:142px;width:260px;height:22px;border-radius:0 4px 0 0;"></div><span class="t" style="left:188.5px;top:147px;font-size:12px;color:#8a3c3c;transform:scaleX(0.9927);">Açıklama</span><span class="t" style="left:391px;top:147px;font-size:12px;color:#8a3c3c;transform:scaleX(0.9167);">Servis </span><span class="t" style="left:424.62px;top:147px;font-size:12px;color:#8a3c3c;transform:scaleX(0.9595);">İşlem </span><span class="t" style="left:455.19px;top:147px;font-size:12px;color:#8a3c3c;transform:scaleX(0.9384);">Aşaması</span><span class="t" style="left:526px;top:147px;font-size:12px;color:#8a3c3c;transform:scaleX(0.9478);">Sözleşmeli</span><span class="t" style="left:695.5px;top:147px;font-size:12px;color:#8a3c3c;">İşlem </span><span class="t" style="left:727.34px;top:147px;font-size:12px;color:#8a3c3c;transform:scaleX(1.0674);">Tipi</span><span class="t" style="left:929.5px;top:147px;font-size:12px;color:#8a3c3c;transform:scaleX(0.9832);">Hazir </span><span class="t" style="left:960.11px;top:147px;font-size:12px;color:#8a3c3c;transform:scaleX(0.9675);">Görev </span><span class="t" style="left:994.79px;top:147px;font-size:12px;color:#8a3c3c;transform:scaleX(0.9914);">Tanımı</span><div class="row sel" style="left:50px;top:165px;width:1060px;height:21px;"></div><div class="ind" style="left:34px;top:165px;width:16px;height:21px;"></div><div class="cb" style="left:547px;top:168px;"></div><div id="focus" style="left:50px;top:165px;width:326px;height:20px;"></div><svg style="left:38px;top:170px" width="7" height="10" viewBox="0 0 7 10"><path d="M1.500 1l4 4-4 4z" fill="#8a6a5c"/></svg><span class="t" style="left:53.25px;top:169px;font-size:12px;color:#000;transform:scaleX(0.8708);">DEVREYA </span><span class="t" style="left:105.43px;top:169px;font-size:12px;color:#000;transform:scaleX(1.0131);">ALMA </span><span class="t" style="left:141.56px;top:169px;font-size:12px;color:#000;transform:scaleX(0.8918);">SONRASI </span><span class="t" style="left:192.74px;top:169px;font-size:12px;color:#000;transform:scaleX(0.8434);">FİLTRE </span><span class="t" style="left:229.87px;top:169px;font-size:12px;color:#000;transform:scaleX(0.8436);">TEKLİFİ </span><span class="t" style="left:270.01px;top:169px;font-size:12px;color:#000;transform:scaleX(0.9789);">HAZIRLAMA</span><span class="t" style="left:380px;top:169px;font-size:12px;color:#000;transform:scaleX(0.7889);">İŞ </span><span class="t" style="left:391.93px;top:169px;font-size:12px;color:#000;transform:scaleX(0.9177);">SONU</span><span class="t" style="left:597px;top:169px;font-size:12px;color:#000;transform:scaleX(0.8145);">DEVREYE </span><span class="t" style="left:646.7px;top:169px;font-size:12px;color:#000;transform:scaleX(1.0035);">ALMA</span><span class="t" style="left:853.25px;top:169px;font-size:12px;color:#000;transform:scaleX(0.8509);">FİLTRE </span><span class="t" style="left:890.71px;top:169px;font-size:12px;color:#000;transform:scaleX(0.8510);">TEKLİFİ </span><span class="t" style="left:931.2px;top:169px;font-size:12px;color:#000;transform:scaleX(0.9850);">HAZIRLANMALI</span><div class="row" style="left:50px;top:186px;width:1060px;height:21px;"></div><div class="ind" style="left:34px;top:186px;width:16px;height:21px;"></div><div class="cb" style="left:547px;top:189px;"></div><svg style="left:547px;top:189px" width="13" height="13" viewBox="0 0 13 13"><path d="M3 6v2.800l2.300 2.200 4.700-4.700V3.500L5.300 8.200z" fill="#2a1a12"/></svg><span class="t" style="left:53.25px;top:190px;font-size:12px;color:#000;transform:scaleX(0.8194);">DEVREYE </span><span class="t" style="left:103.25px;top:190px;font-size:12px;color:#000;transform:scaleX(1.0096);">ALMA </span><span class="t" style="left:139.25px;top:190px;font-size:12px;color:#000;transform:scaleX(0.8693);">ÖNCESİ </span><span class="t" style="left:182.25px;top:190px;font-size:12px;color:#000;transform:scaleX(0.9186);">GARANTİ </span><span class="t" style="left:234.25px;top:190px;font-size:12px;color:#000;transform:scaleX(0.8178);">BELGESİ </span><span class="t" style="left:279.25px;top:190px;font-size:12px;color:#000;transform:scaleX(0.9829);">HAZIRLAMA-1</span><span class="t" style="left:380px;top:190px;font-size:12px;color:#000;transform:scaleX(0.8037);">İŞ </span><span class="t" style="left:392.16px;top:190px;font-size:12px;color:#000;transform:scaleX(0.9141);">BAŞLANGICI</span><span class="t" style="left:597px;top:190px;font-size:12px;color:#000;transform:scaleX(0.8145);">DEVREYE </span><span class="t" style="left:646.7px;top:190px;font-size:12px;color:#000;transform:scaleX(1.0035);">ALMA</span><span class="t" style="left:853.25px;top:190px;font-size:12px;color:#000;transform:scaleX(0.9236);">GARANTİ </span><span class="t" style="left:905.54px;top:190px;font-size:12px;color:#000;transform:scaleX(0.8223);">BELGESİ </span><span class="t" style="left:950.78px;top:190px;font-size:12px;color:#000;transform:scaleX(0.9783);">HAZIRLANMALI</span><div class="row" style="left:50px;top:207px;width:1060px;height:21px;"></div><div class="ind" style="left:34px;top:207px;width:16px;height:21px;"></div><div class="cb" style="left:547px;top:210px;"></div><span class="t" style="left:53.25px;top:211px;font-size:12px;color:#000;transform:scaleX(0.8221);">DEVREYE </span><span class="t" style="left:103.41px;top:211px;font-size:12px;color:#000;transform:scaleX(1.0129);">ALMA </span><span class="t" style="left:139.53px;top:211px;font-size:12px;color:#000;transform:scaleX(0.8721);">ÖNCESİ </span><span class="t" style="left:182.67px;top:211px;font-size:12px;color:#000;transform:scaleX(0.9216);">GARANTİ </span><span class="t" style="left:234.85px;top:211px;font-size:12px;color:#000;transform:scaleX(0.8205);">BELGESİ </span><span class="t" style="left:279.99px;top:211px;font-size:12px;color:#000;transform:scaleX(0.9861);">HAZIRLAMA-2</span><span class="t" style="left:380px;top:211px;font-size:12px;color:#000;transform:scaleX(0.8037);">İŞ </span><span class="t" style="left:392.16px;top:211px;font-size:12px;color:#000;transform:scaleX(0.9141);">BAŞLANGICI</span><span class="t" style="left:597px;top:211px;font-size:12px;color:#000;transform:scaleX(0.8145);">DEVREYE </span><span class="t" style="left:646.7px;top:211px;font-size:12px;color:#000;transform:scaleX(1.0035);">ALMA</span><span class="t" style="left:853.25px;top:211px;font-size:12px;color:#000;transform:scaleX(0.9236);">GARANTİ </span><span class="t" style="left:905.54px;top:211px;font-size:12px;color:#000;transform:scaleX(0.8223);">BELGESİ </span><span class="t" style="left:950.78px;top:211px;font-size:12px;color:#000;transform:scaleX(0.9783);">HAZIRLANMALI</span><div class="row" style="left:50px;top:228px;width:1060px;height:21px;"></div><div class="ind" style="left:34px;top:228px;width:16px;height:21px;"></div><div class="cb" style="left:547px;top:231px;"></div><span class="t" style="left:53.25px;top:232px;font-size:12px;color:#000;transform:scaleX(0.8194);">DEVREYE </span><span class="t" style="left:103.25px;top:232px;font-size:12px;color:#000;transform:scaleX(1.0096);">ALMA </span><span class="t" style="left:139.25px;top:232px;font-size:12px;color:#000;transform:scaleX(0.8886);">SONRASI </span><span class="t" style="left:190.25px;top:232px;font-size:12px;color:#000;transform:scaleX(0.9640);">BAKIM </span><span class="t" style="left:229.25px;top:232px;font-size:12px;color:#000;transform:scaleX(0.8406);">TEKLİFİ </span><span class="t" style="left:269.25px;top:232px;font-size:12px;color:#000;transform:scaleX(0.9754);">HAZIRLAMA</span><span class="t" style="left:380px;top:232px;font-size:12px;color:#000;transform:scaleX(0.7889);">İŞ </span><span class="t" style="left:391.93px;top:232px;font-size:12px;color:#000;transform:scaleX(0.9177);">SONU</span><span class="t" style="left:597px;top:232px;font-size:12px;color:#000;transform:scaleX(0.8145);">DEVREYE </span><span class="t" style="left:646.7px;top:232px;font-size:12px;color:#000;transform:scaleX(1.0035);">ALMA</span><span class="t" style="left:853.25px;top:232px;font-size:12px;color:#000;transform:scaleX(0.8766);">PERİYODİK </span><span class="t" style="left:913.56px;top:232px;font-size:12px;color:#000;transform:scaleX(0.9690);">BAKIM </span><span class="t" style="left:952.76px;top:232px;font-size:12px;color:#000;transform:scaleX(0.8449);">TEKLİFİ </span><span class="t" style="left:992.97px;top:232px;font-size:12px;color:#000;transform:scaleX(0.8817);">VERİLMELİ</span><div class="row" style="left:50px;top:249px;width:1060px;height:21px;"></div><div class="ind" style="left:34px;top:249px;width:16px;height:21px;"></div><div class="cb" style="left:547px;top:252px;"></div><span class="t" style="left:53.25px;top:253px;font-size:12px;color:#000;transform:scaleX(0.9272);">GARANTİ </span><span class="t" style="left:105.74px;top:253px;font-size:12px;color:#000;transform:scaleX(0.8648);">DIŞI </span><span class="t" style="left:129.48px;top:253px;font-size:12px;color:#000;">- </span><span class="t" style="left:137.03px;top:253px;font-size:12px;color:#000;transform:scaleX(0.9696);">FATURALAMA</span><span class="t" style="left:380px;top:253px;font-size:12px;color:#000;transform:scaleX(0.7889);">İŞ </span><span class="t" style="left:391.93px;top:253px;font-size:12px;color:#000;transform:scaleX(0.9177);">SONU</span><span class="t" style="left:597px;top:253px;font-size:12px;color:#000;transform:scaleX(0.9313);">GARANTİ </span><span class="t" style="left:649.72px;top:253px;font-size:12px;color:#000;transform:scaleX(0.8687);">DIŞI</span><span class="t" style="left:853.25px;top:253px;font-size:12px;color:#000;transform:scaleX(0.9327);">FATURA </span><span class="t" style="left:899.6px;top:253px;font-size:12px;color:#000;transform:scaleX(0.9804);">HAZIRLANMALI</span><div class="row" style="left:50px;top:270px;width:1060px;height:21px;"></div><div class="ind" style="left:34px;top:270px;width:16px;height:21px;"></div><div class="cb" style="left:547px;top:273px;"></div><svg style="left:547px;top:273px" width="13" height="13" viewBox="0 0 13 13"><path d="M3 6v2.800l2.300 2.200 4.700-4.700V3.500L5.300 8.200z" fill="#2a1a12"/></svg><span class="t" style="left:53.25px;top:274px;font-size:12px;color:#000;transform:scaleX(0.9237);">GARANTİ </span><span class="t" style="left:105.54px;top:274px;font-size:12px;color:#000;transform:scaleX(0.8615);">DIŞI </span><span class="t" style="left:128.67px;top:274px;font-size:12px;color:#000;transform:scaleX(0.8033);">SERVİS </span><span class="t" style="left:166.88px;top:274px;font-size:12px;color:#000;transform:scaleX(0.8741);">ÖNCESİ </span><span class="t" style="left:210.11px;top:274px;font-size:12px;color:#000;transform:scaleX(0.8403);">TEKLİF </span><span class="t" style="left:247.32px;top:274px;font-size:12px;color:#000;transform:scaleX(0.9883);">HAZIRLAMA-1</span><span class="t" style="left:380px;top:274px;font-size:12px;color:#000;transform:scaleX(0.8037);">İŞ </span><span class="t" style="left:392.16px;top:274px;font-size:12px;color:#000;transform:scaleX(0.9141);">BAŞLANGICI</span><span class="t" style="left:597px;top:274px;font-size:12px;color:#000;transform:scaleX(0.9313);">GARANTİ </span><span class="t" style="left:649.72px;top:274px;font-size:12px;color:#000;transform:scaleX(0.8687);">DIŞI</span><span class="t" style="left:853.25px;top:274px;font-size:12px;color:#000;transform:scaleX(0.9330);">ÜRÜN </span><span class="t" style="left:889.49px;top:274px;font-size:12px;color:#000;">/ </span><span class="t" style="left:896.72px;top:274px;font-size:12px;color:#000;transform:scaleX(0.9505);">HİZMET </span><span class="t" style="left:942.21px;top:274px;font-size:12px;color:#000;transform:scaleX(0.8498);">TEKLİFİ </span><span class="t" style="left:982.65px;top:274px;font-size:12px;color:#000;transform:scaleX(0.8867);">VERİLMELİ</span><div class="row" style="left:50px;top:291px;width:1060px;height:21px;"></div><div class="ind" style="left:34px;top:291px;width:16px;height:21px;"></div><div class="cb" style="left:547px;top:294px;"></div><span class="t" style="left:53.25px;top:295px;font-size:12px;color:#000;transform:scaleX(0.9253);">GARANTİ </span><span class="t" style="left:105.63px;top:295px;font-size:12px;color:#000;transform:scaleX(0.8631);">DIŞI </span><span class="t" style="left:128.8px;top:295px;font-size:12px;color:#000;transform:scaleX(0.8048);">SERVİS </span><span class="t" style="left:167.08px;top:295px;font-size:12px;color:#000;transform:scaleX(0.8757);">ÖNCESİ </span><span class="t" style="left:210.4px;top:295px;font-size:12px;color:#000;transform:scaleX(0.8418);">TEKLİF </span><span class="t" style="left:247.67px;top:295px;font-size:12px;color:#000;transform:scaleX(0.9901);">HAZIRLAMA-2</span><span class="t" style="left:380px;top:295px;font-size:12px;color:#000;transform:scaleX(0.8037);">İŞ </span><span class="t" style="left:392.16px;top:295px;font-size:12px;color:#000;transform:scaleX(0.9141);">BAŞLANGICI</span><span class="t" style="left:597px;top:295px;font-size:12px;color:#000;transform:scaleX(0.9313);">GARANTİ </span><span class="t" style="left:649.72px;top:295px;font-size:12px;color:#000;transform:scaleX(0.8687);">DIŞI</span><span class="t" style="left:853.25px;top:295px;font-size:12px;color:#000;transform:scaleX(0.9330);">ÜRÜN </span><span class="t" style="left:889.49px;top:295px;font-size:12px;color:#000;">/ </span><span class="t" style="left:896.72px;top:295px;font-size:12px;color:#000;transform:scaleX(0.9505);">HİZMET </span><span class="t" style="left:942.21px;top:295px;font-size:12px;color:#000;transform:scaleX(0.8498);">TEKLİFİ </span><span class="t" style="left:982.65px;top:295px;font-size:12px;color:#000;transform:scaleX(0.8867);">VERİLMELİ</span><div class="row" style="left:50px;top:312px;width:1060px;height:21px;"></div><div class="ind" style="left:34px;top:312px;width:16px;height:21px;"></div><div class="cb" style="left:547px;top:315px;"></div><span class="t" style="left:53.25px;top:316px;font-size:12px;color:#000;transform:scaleX(0.9110);">MÜNFERİT </span><span class="t" style="left:112.76px;top:316px;font-size:12px;color:#000;transform:scaleX(0.9723);">BAKIM </span><span class="t" style="left:152.09px;top:316px;font-size:12px;color:#000;transform:scaleX(0.9688);">FATURALAMA</span><span class="t" style="left:380px;top:316px;font-size:12px;color:#000;transform:scaleX(0.7889);">İŞ </span><span class="t" style="left:391.93px;top:316px;font-size:12px;color:#000;transform:scaleX(0.9177);">SONU</span><span class="t" style="left:597px;top:316px;font-size:12px;color:#000;transform:scaleX(0.9080);">MÜNFERİT </span><span class="t" style="left:656.31px;top:316px;font-size:12px;color:#000;transform:scaleX(0.9691);">BAKIM</span><span class="t" style="left:853.25px;top:316px;font-size:12px;color:#000;transform:scaleX(0.9327);">FATURA </span><span class="t" style="left:899.6px;top:316px;font-size:12px;color:#000;transform:scaleX(0.9804);">HAZIRLANMALI</span><div class="row" style="left:50px;top:333px;width:1060px;height:21px;"></div><div class="ind" style="left:34px;top:333px;width:16px;height:21px;"></div><div class="cb" style="left:547px;top:336px;"></div><span class="t" style="left:53.25px;top:337px;font-size:12px;color:#000;transform:scaleX(0.9106);">MÜNFERİT </span><span class="t" style="left:112.73px;top:337px;font-size:12px;color:#000;transform:scaleX(0.9719);">BAKIM </span><span class="t" style="left:152.05px;top:337px;font-size:12px;color:#000;transform:scaleX(0.8764);">ÖNCESİ </span><span class="t" style="left:195.4px;top:337px;font-size:12px;color:#000;transform:scaleX(0.8425);">TEKLİF </span><span class="t" style="left:232.7px;top:337px;font-size:12px;color:#000;transform:scaleX(0.9834);">HAZIRLAMA</span><span class="t" style="left:380px;top:337px;font-size:12px;color:#000;transform:scaleX(0.8037);">İŞ </span><span class="t" style="left:392.16px;top:337px;font-size:12px;color:#000;transform:scaleX(0.9141);">BAŞLANGICI</span><span class="t" style="left:597px;top:337px;font-size:12px;color:#000;transform:scaleX(0.9080);">MÜNFERİT </span><span class="t" style="left:656.31px;top:337px;font-size:12px;color:#000;transform:scaleX(0.9691);">BAKIM</span><span class="t" style="left:853.25px;top:337px;font-size:12px;color:#000;transform:scaleX(0.9330);">ÜRÜN </span><span class="t" style="left:889.49px;top:337px;font-size:12px;color:#000;">/ </span><span class="t" style="left:896.72px;top:337px;font-size:12px;color:#000;transform:scaleX(0.9505);">HİZMET </span><span class="t" style="left:942.21px;top:337px;font-size:12px;color:#000;transform:scaleX(0.8498);">TEKLİFİ </span><span class="t" style="left:982.65px;top:337px;font-size:12px;color:#000;transform:scaleX(0.8867);">VERİLMELİ</span><div class="row" style="left:50px;top:354px;width:1060px;height:21px;"></div><div class="ind" style="left:34px;top:354px;width:16px;height:21px;"></div><div class="cb" style="left:547px;top:357px;"></div><svg style="left:547px;top:357px" width="13" height="13" viewBox="0 0 13 13"><path d="M3 6v2.800l2.300 2.200 4.700-4.700V3.500L5.300 8.200z" fill="#2a1a12"/></svg><span class="t" style="left:53.25px;top:358px;font-size:12px;color:#000;transform:scaleX(0.8721);">PERİYODİK </span><span class="t" style="left:113.25px;top:358px;font-size:12px;color:#000;transform:scaleX(0.9640);">BAKIM </span><span class="t" style="left:152.25px;top:358px;font-size:12px;color:#000;transform:scaleX(0.8886);">SONRASI </span><span class="t" style="left:203.25px;top:358px;font-size:12px;color:#000;transform:scaleX(0.9605);">FATURALAMA</span><span class="t" style="left:380px;top:358px;font-size:12px;color:#000;transform:scaleX(0.7889);">İŞ </span><span class="t" style="left:391.93px;top:358px;font-size:12px;color:#000;transform:scaleX(0.9177);">SONU</span><span class="t" style="left:597px;top:358px;font-size:12px;color:#000;transform:scaleX(0.8676);">PERİYODİK </span><span class="t" style="left:656.69px;top:358px;font-size:12px;color:#000;transform:scaleX(0.9590);">BAKIM</span><span class="t" style="left:853.25px;top:358px;font-size:12px;color:#000;transform:scaleX(0.9327);">FATURA </span><span class="t" style="left:899.6px;top:358px;font-size:12px;color:#000;transform:scaleX(0.9804);">HAZIRLANMALI</span><div class="row" style="left:50px;top:375px;width:1060px;height:21px;"></div><div class="ind" style="left:34px;top:375px;width:16px;height:21px;"></div><div class="cb" style="left:547px;top:378px;"></div><div class="row" style="left:50px;top:396px;width:1060px;height:21px;"></div><div class="ind" style="left:34px;top:396px;width:16px;height:21px;"></div><div class="cb" style="left:547px;top:399px;"></div><div class="row" style="left:50px;top:417px;width:1060px;height:21px;"></div><div class="ind" style="left:34px;top:417px;width:16px;height:21px;"></div><div class="cb" style="left:547px;top:420px;"></div><div class="row" style="left:50px;top:438px;width:1060px;height:21px;"></div><div class="ind" style="left:34px;top:438px;width:16px;height:21px;"></div><div class="cb" style="left:547px;top:441px;"></div><div class="row" style="left:50px;top:459px;width:1060px;height:21px;"></div><div class="ind" style="left:34px;top:459px;width:16px;height:21px;"></div><div class="cb" style="left:547px;top:462px;"></div><div class="row" style="left:50px;top:480px;width:1060px;height:21px;"></div><div class="ind" style="left:34px;top:480px;width:16px;height:21px;"></div><div class="cb" style="left:547px;top:483px;"></div><div class="row" style="left:50px;top:501px;width:1060px;height:21px;"></div><div class="ind" style="left:34px;top:501px;width:16px;height:21px;"></div><div class="cb" style="left:547px;top:504px;"></div><div class="row" style="left:50px;top:522px;width:1060px;height:21px;"></div><div class="ind" style="left:34px;top:522px;width:16px;height:21px;"></div><div class="cb" style="left:547px;top:525px;"></div><div class="row" style="left:50px;top:543px;width:1060px;height:21px;"></div><div class="ind" style="left:34px;top:543px;width:16px;height:21px;"></div><div class="cb" style="left:547px;top:546px;"></div><div class="row" style="left:50px;top:564px;width:1060px;height:21px;"></div><div class="ind" style="left:34px;top:564px;width:16px;height:21px;"></div><div class="cb" style="left:547px;top:567px;"></div><div class="row" style="left:50px;top:585px;width:1060px;height:21px;"></div><div class="ind" style="left:34px;top:585px;width:16px;height:21px;"></div><div class="cb" style="left:547px;top:588px;"></div><div class="row" style="left:50px;top:606px;width:1060px;height:21px;"></div><div class="ind" style="left:34px;top:606px;width:16px;height:21px;"></div><div class="cb" style="left:547px;top:609px;"></div><div class="row" style="left:50px;top:627px;width:1060px;height:21px;"></div><div class="ind" style="left:34px;top:627px;width:16px;height:21px;"></div><div class="cb" style="left:547px;top:630px;"></div><div class="row" style="left:50px;top:648px;width:1060px;height:21px;"></div><div class="ind" style="left:34px;top:648px;width:16px;height:21px;"></div><div class="cb" style="left:547px;top:651px;"></div><div class="row" style="left:50px;top:669px;width:1060px;height:21px;"></div><div class="ind" style="left:34px;top:669px;width:16px;height:21px;"></div><div class="cb" style="left:547px;top:672px;"></div><div class="row" style="left:50px;top:690px;width:1060px;height:21px;"></div><div class="ind" style="left:34px;top:690px;width:16px;height:21px;"></div><div class="cb" style="left:547px;top:693px;"></div><div class="row" style="left:50px;top:711px;width:1060px;height:21px;"></div><div class="ind" style="left:34px;top:711px;width:16px;height:21px;"></div><div class="cb" style="left:547px;top:714px;"></div><div class="row" style="left:50px;top:732px;width:1060px;height:21px;"></div><div class="ind" style="left:34px;top:732px;width:16px;height:21px;"></div><div class="cb" style="left:547px;top:735px;"></div><div class="row" style="left:50px;top:753px;width:1060px;height:21px;"></div><div class="ind" style="left:34px;top:753px;width:16px;height:21px;"></div><div class="cb" style="left:547px;top:756px;"></div><div class="row" style="left:50px;top:774px;width:1060px;height:21px;"></div><div class="ind" style="left:34px;top:774px;width:16px;height:21px;"></div><div class="cb" style="left:547px;top:777px;"></div><div class="row" style="left:50px;top:795px;width:1060px;height:21px;"></div><div class="ind" style="left:34px;top:795px;width:16px;height:21px;"></div><div class="cb" style="left:547px;top:798px;"></div><div class="row" style="left:50px;top:816px;width:1060px;height:21px;"></div><div class="ind" style="left:34px;top:816px;width:16px;height:21px;"></div><div class="cb" style="left:547px;top:819px;"></div><div class="row" style="left:50px;top:837px;width:1060px;height:21px;"></div><div class="ind" style="left:34px;top:837px;width:16px;height:21px;"></div><div class="cb" style="left:547px;top:840px;"></div><div class="vline" style="left:376px;top:165px;width:1px;height:693px;"></div><div class="vline" style="left:513px;top:165px;width:1px;height:693px;"></div><div class="vline" style="left:593px;top:165px;width:1px;height:693px;"></div><div class="vline" style="left:849px;top:165px;width:1px;height:693px;"></div><div id="vsb" style="left:1111px;top:141px;width:18px;height:718px;"></div><div class="sbtn" style="left:1111px;top:141px;width:17px;height:17px;"></div><div class="sbtn" style="left:1111px;top:841px;width:17px;height:17px;"></div><div class="sbtn" id="thumb" style="left:1111px;top:158px;width:17px;height:625px;"></div><svg style="left:1115px;top:146px" width="10" height="7" viewBox="0 0 10 7"><path d="M1 5.500l4-4 4 4" fill="none" stroke="#6e5248" stroke-width="1.300"/></svg><svg style="left:1115px;top:846px" width="10" height="7" viewBox="0 0 10 7"><path d="M1 1.500l4 4 4-4" fill="none" stroke="#6e5248" stroke-width="1.300"/></svg><div style="left:1116px;top:468px;width:7px;height:1px;background:#7d6256"></div><div style="left:1116px;top:470px;width:7px;height:1px;background:#7d6256"></div><div style="left:1116px;top:472px;width:7px;height:1px;background:#7d6256"></div>
<div id="panel" style="left:1141px;top:114px;width:298px;height:755px;"></div><div id="phead" style="left:1141px;top:108px;width:298px;height:27px;"></div><span class="t" style="left:1148.2px;top:116px;font-size:12px;color:#eeeee6;transform:scaleX(0.8933);-webkit-text-stroke:0;">BİLGİLENDİRME </span><span class="t" style="left:1234.01px;top:116px;font-size:12px;color:#eeeee6;transform:scaleX(0.9417);-webkit-text-stroke:0;">PANOSU</span><svg style="left:1421px;top:116px" width="9" height="11" viewBox="0 0 9 11"><path d="M2.500 1.500h4.200M3 1.500v4.500M6.200 1.500v4.500M5.300 1.500v4.500M1 6.500h7.200M4.600 6.500v4" stroke="#d4dce8" stroke-width="1" fill="none"/></svg><div id="ptb" style="left:1142px;top:135px;width:296px;height:26px;"></div><div class="pdot" style="left:1146px;top:140px;"></div><div class="pdot" style="left:1146px;top:144px;"></div><div class="pdot" style="left:1146px;top:148px;"></div><div class="pdot" style="left:1146px;top:152px;"></div><div class="psep" style="left:1201px;top:141px;"></div><div class="psep" style="left:1253px;top:141px;"></div><div class="psep" style="left:1305px;top:141px;"></div><div class="psep" style="left:1334px;top:141px;"></div><div class="psep" style="left:1363px;top:141px;"></div><svg style="left:1155px;top:140px" width="40" height="16" viewBox="0 0 40 16"><path d="M6 1.500h4.500v4.500h4.500v4.500h-4.500v4.500h-4.500v-4.500h-4.500v-4.500h4.500z" fill="#e070c8" stroke="#e614c8" stroke-width="1"/><path d="M1.500 10.500h4.500v4.500h4.500M10.500 10.500h4.500" stroke="#8a0a78" stroke-width="1" fill="none"/>
<rect x="24.500" y="5.500" width="13.500" height="5.500" fill="#e070c8" stroke="#e614c8"/><path d="M24.500 11h13.500" stroke="#8a0a78" stroke-width="1"/></svg><svg style="left:1209px;top:139px" width="38" height="18" viewBox="0 0 38 18"><defs><linearGradient id="px" x1="0" y1="0" x2="1" y2="1"><stop offset="0" stop-color="#f6906a"/><stop offset=".5" stop-color="#e85a30"/><stop offset="1" stop-color="#d2340c"/></linearGradient></defs>
<path d="M2 7.800l1.500-1.200 3 3L13.300 2l.9.900-7.400 10.200z" fill="#a4d86c" stroke="#5aa02a" stroke-width=".8" stroke-linejoin="round"/>
<rect x="21.500" y="1.500" width="15" height="15" rx="2" fill="url(#px)" stroke="#e0603a" stroke-width="1"/><path d="M25 5l8 8M33 5l-8 8" stroke="#fff" stroke-width="1.500"/></svg><span class="t" style="left:1259px;top:139px;font:bold 10px 'Liberation Serif',serif;-webkit-text-stroke:0;color:#2a3fb4;line-height:1;">A</span><span class="t" style="left:1259px;top:147px;font:bold 10px 'Liberation Serif',serif;-webkit-text-stroke:0;color:#8a2020;line-height:1;">Z</span><svg style="left:1268px;top:140px" width="8" height="16" viewBox="0 0 8 16"><path d="M4 0.500v13" stroke="#111" stroke-width="1"/><path d="M1.300 10.500l2.700 4.500 2.700-4.500z" fill="#111"/></svg><span class="t" style="left:1283px;top:139px;font:bold 10px 'Liberation Serif',serif;-webkit-text-stroke:0;color:#8a2020;line-height:1;">Z</span><span class="t" style="left:1283px;top:147px;font:bold 10px 'Liberation Serif',serif;-webkit-text-stroke:0;color:#2a3fb4;line-height:1;">A</span><svg style="left:1291px;top:140px" width="8" height="16" viewBox="0 0 8 16"><path d="M4 2v13.500" stroke="#111" stroke-width="1"/><path d="M1.300 5.500l2.700-4.500 2.700 4.500z" fill="#111"/></svg><svg style="left:1311px;top:139px" width="18" height="17" viewBox="0 0 18 17"><path d="M1.800 15.200V2.200h5.500l2 2.200h6.400v10.800z" fill="none" stroke="#555" stroke-width="1.500" stroke-linejoin="miter"/></svg><svg style="left:1341px;top:141px" width="15" height="15" viewBox="0 0 15 15"><rect width="15" height="15" fill="#d9d9ee"/><path d="M3 6.500a4.800 4.800 0 0 1 8.500-2.200" fill="none" stroke="#2a5ac8" stroke-width="1.800"/><path d="M12.800 2l-.3 4.200-3.800-1.500z" fill="#2a5ac8"/><path d="M12 8.500a4.800 4.800 0 0 1-8.500 2.200" fill="none" stroke="#2a5ac8" stroke-width="1.800"/><path d="M2.200 13l.3-4.200 3.800 1.500z" fill="#2a5ac8"/></svg><div id="tree" style="left:1143px;top:161px;width:294px;height:553px;"></div><div id="trow1" style="left:1145px;top:163px;width:290px;height:21px;"></div><div id="trow2ind" style="left:1145px;top:184px;width:5px;height:21px;"></div><div id="trow2" style="left:1150px;top:184px;width:285px;height:21px;"></div><div class="tbox" style="left:1151px;top:168px;"></div><svg style="left:1151px;top:168px" width="11" height="11" viewBox="0 0 11 11"><path d="M2 5.500h7" stroke="#111" stroke-width="1.500"/></svg><div class="tbox" style="left:1156px;top:189px;"></div><svg style="left:1156px;top:189px" width="11" height="11" viewBox="0 0 11 11"><path d="M2 5.500h7M5.500 2v7" stroke="#111" stroke-width="1.500"/></svg><span class="t" style="left:1171.5px;top:168px;font-size:12px;color:#fff;transform:scaleX(0.9286);-webkit-text-stroke:0;">Gelen </span><span class="t" style="left:1204.22px;top:168px;font-size:12px;color:#fff;transform:scaleX(0.9819);-webkit-text-stroke:0;">Kutusu</span><span class="t" style="left:1173.7px;top:189px;font-size:12px;color:#fff;transform:scaleX(0.9239);-webkit-text-stroke:0;">Görev</span><div id="split" style="left:1143px;top:714px;width:294px;height:7px;"></div><div style="left:1283px;top:717px;width:2px;height:2px;background:#b4a48e;"></div><div style="left:1287px;top:717px;width:2px;height:2px;background:#b4a48e;"></div><div style="left:1291px;top:717px;width:2px;height:2px;background:#b4a48e;"></div><div style="left:1295px;top:717px;width:2px;height:2px;background:#b4a48e;"></div><div id="auhead" style="left:1143px;top:721px;width:294px;height:22px;"></div><span class="t" style="left:1246.8px;top:726px;font-size:12px;color:#8a3c3c;transform:scaleX(1.0759);">Aktif </span><span class="t" style="left:1274.93px;top:726px;font-size:12px;color:#8a3c3c;transform:scaleX(0.9814);">Kullanıcılar</span><div id="aulist" style="left:1143px;top:743px;width:294px;height:124px;"></div><div style="left:1144px;top:744px;width:292px;height:18px;background:#316ac5;"></div><span class="t" style="left:1146.5px;top:747px;font-size:12px;color:#fff;transform:scaleX(0.8857);-webkit-text-stroke:0;">YÖNETİCİ </span><span class="t" style="left:1202.72px;top:747px;font-size:12px;color:#fff;transform:scaleX(0.9318);-webkit-text-stroke:0;">[301.NB-02.SQL2008.BAKIM:82:1333:1]</span>
<div id="status" style="left:0;top:870px;width:1440px;height:28px;"></div><div style="left:0;top:898px;width:1440px;height:1px;background:#17171a;"></div><div id="botedge" style="left:0;top:899px;width:1440px;height:1px;"></div><svg style="left:8px;top:876px" width="14" height="18" viewBox="0 0 14 18"><defs><linearGradient id="ub" x1="0" y1="0" x2="0" y2="1"><stop offset="0" stop-color="#e2efff"/><stop offset=".6" stop-color="#a9ccf8"/><stop offset="1" stop-color="#5f97e6"/></linearGradient>
<radialGradient id="uh" cx=".4" cy=".35" r=".7"><stop offset="0" stop-color="#ffe0b8"/><stop offset=".5" stop-color="#f29a3c"/><stop offset="1" stop-color="#c8641a"/></radialGradient></defs>
<path d="M1.300 16.600V9.500c0-1.800 1.600-3 3.400-3h4.600c1.800 0 3.400 1.200 3.400 3v7.100z" fill="url(#ub)" stroke="#3f74c8" stroke-width=".8"/><path d="M3.800 16.500v-5M10.200 16.500v-5" stroke="#6a9be0" stroke-width=".8"/>
<circle cx="7" cy="4.200" r="3.200" fill="url(#uh)"/></svg><span class="t" style="left:27.5px;top:879px;font-size:12px;color:#ffffff;transform:scaleX(0.9087);-webkit-text-stroke:0;">YÖNETİCİ</span><div class="ssep" style="left:84px;top:872px;"></div><div class="ssep" style="left:95px;top:872px;"></div>
</div>
</body></html>
